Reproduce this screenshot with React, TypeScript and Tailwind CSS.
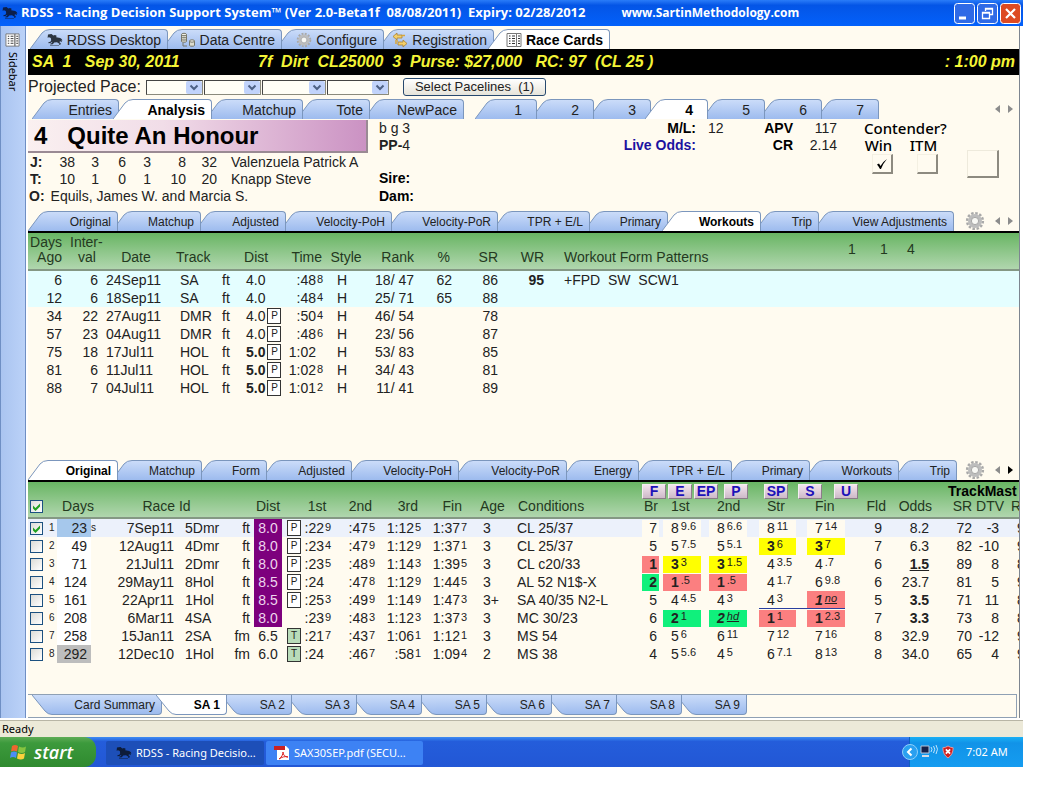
import React, { useState } from 'react';
import clsx from 'clsx';

interface TabItem {
    label: string;
    width: string;
    icon?: React.ReactNode;
}

interface TabStripProps {
    tabs: TabItem[];
    active?: string;
    onSelect: (label: string) => void;
    text?: string;
    pad?: string;
}

function HorseIcon({ className = "w-4 h-4 text-slate-800" }: { className?: string }) {
    return (
        <svg viewBox="0 0 16 16" className={clsx("shrink-0", className)} fill="currentColor" aria-hidden="true">
            <path d="M1 2.5 4.5 2l1.8 1.6L8 3l1.6.8-.4 1.4 2.8.6c1.6.3 2.6 1 3.5 2.6l-1-.1.4 1.9-1.6-1-1 .7 1.6 1.6-.8 1.6-1-.3.3-1.1-2.4-1.4-2.8.2-1.4 1.7-2.3.4-.3-.9 1.7-.6.5-1.4L3.4 11l-1.9.2-.1-.9 2-.5.8-1.6L3.8 6 2 5.3.6 5.7z" />
            <path d="M3 13h9v1H3z" opacity=".5" />
        </svg>
    );
}

function GearIcon({ className = "w-5 h-5" }: { className?: string }) {
    return (
        <svg viewBox="0 0 20 20" className={clsx("shrink-0", className)} fill="none" aria-hidden="true">
            <circle cx="10" cy="10" r="7.800" stroke="#a9a9a9" strokeWidth="2.600" strokeDasharray="2.450 1.634" />
            <circle cx="10" cy="10" r="5.200" stroke="#bdbdbd" strokeWidth="3.600" />
            <circle cx="10" cy="10" r="3.600" fill="#f8f8f4" stroke="#969696" strokeWidth=".8" />
        </svg>
    );
}

function DataIcon() {
    return (
        <svg viewBox="0 0 16 16" className="w-4 h-4 shrink-0" aria-hidden="true">
            <path d="M1.5 2.5v7c0 1 5 1 5 0v-7" fill="#dcdccf" stroke="#77776a" />
            <ellipse cx="4" cy="2.5" rx="2.5" ry="1.2" fill="#f1f1e8" stroke="#77776a" />
            <path d="M1.5 5c0 1 5 1 5 0M1.5 7.300c0 1 5 1 5 0M3 11v3h4" fill="none" stroke="#77776a" />
            <path d="M9.500 9v4.500c0 1 5 1 5 0V9" fill="#dcdccf" stroke="#77776a" />
            <ellipse cx="12" cy="9" rx="2.500" ry="1.200" fill="#f1f1e8" stroke="#77776a" />
        </svg>
    );
}

function RegisterIcon() {
    return (
        <svg viewBox="0 0 16 16" className="w-4 h-4 shrink-0" fill="#f3cf6a" stroke="#a98232" strokeWidth=".8" aria-hidden="true">
            <path d="M1 4.500 5 1v2h5v3H5v2z" />
            <path d="M15 11.500 11 15v-2H6v-3h5V8z" />
            <path d="M3 9h3M3 11h2M10 3.500h3" stroke="#d9a63a" strokeWidth="1.400" />
        </svg>
    );
}

function CardIcon({ className = "w-4 h-4" }: { className?: string }) {
    return (
        <svg viewBox="0 0 16 16" className={clsx("shrink-0", className)} aria-hidden="true">
            <path d="M1 1.500h9.500v13H1zM10.500 1.500H15v13h-4.500z" fill="#fff" stroke="#777" />
            <path d="M3 4h1.500M3 6.500h1.500M3 9h1.500M3 11.500h1.500M6 4h3M6 6.500h3M6 9h3M6 11.500h3M12 4h2M12 6.500h2M12 9h2M12 11.500h2" stroke="#333" />
        </svg>
    );
}

function Arrows({ rightActive = false }: { rightActive?: boolean }) {
    return (
        <div className="flex items-center gap-2 pr-1.5">
            <button aria-label="Scroll tabs left"><svg viewBox="0 0 5 8" className="w-[5px] h-2"><path d="M5 0v8L0 4z" fill="#8c8c8c" /></svg></button>
            <button aria-label="Scroll tabs right"><svg viewBox="0 0 5 8" className="w-[5px] h-2"><path d="M0 0v8l5-4z" fill={rightActive ? "#000" : "#8c8c8c"} /></svg></button>
        </div>
    );
}

function TabStrip({ tabs, active, onSelect, text = "text-xs", pad = "pr-1.5" }: TabStripProps) {
    return (
        <div className="flex h-5">
            {tabs.map((tab, i) => {
                const on = tab.label === active;
                return (
                    <button
                        key={tab.label}
                        onClick={() => onSelect(tab.label)}
                        style={{ zIndex: on ? 30 : 20 - i }}
                        className={clsx("relative flex h-5 shrink-0 whitespace-nowrap", i > 0 && "-ml-1.5", tab.width, text)}
                    >
                        <svg viewBox="0 0 20 20" className="w-5 h-5 shrink-0">
                            <path d="M0 20 12 4Q15 .5 20 .5V20Z" fill={on ? "#fff" : "url(#tabFill)"} />
                            <path d="M0 20 12 4Q15 .5 20 .5" fill="none" stroke="#7b96bd" />
                        </svg>
                        <span
                            className={clsx(
                                "flex h-5 flex-1 items-center justify-end gap-1 rounded-tr-[4px] border-t border-r border-[#7b96bd]",
                                pad,
                                on ? "bg-white font-bold text-black" : "bg-linear-to-b from-[#cbdcf9] to-[#9dbbee] text-[#222]"
                            )}
                        >
                            <span className="-ml-5 flex items-center gap-1">{tab.icon}{tab.label}</span>
                        </span>
                    </button>
                );
            })}
        </div>
    );
}

// bottom tabs hang down from the sheet, so the slant runs the other way
function SheetTabs({ tabs, active, onSelect }: TabStripProps) {
    return (
        <div className="flex h-5 pl-1">
            {tabs.map((tab, i) => {
                const on = tab.label === active;
                return (
                    <button
                        key={tab.label}
                        onClick={() => onSelect(tab.label)}
                        style={{ zIndex: on ? 30 : 20 - i }}
                        className={clsx("relative flex h-5 shrink-0 text-xs whitespace-nowrap", i > 0 && "-ml-1.5", tab.width)}
                    >
                        <svg viewBox="0 0 20 20" className="w-5 h-5 shrink-0">
                            <path d="M0 0 13 16Q16 19.500 20 19.500V0Z" fill={on ? "#fff" : "url(#tabFill)"} />
                            <path d="M0 0 13 16Q16 19.500 20 19.500" fill="none" stroke="#7b96bd" />
                        </svg>
                        <span className={clsx("flex h-5 flex-1 items-center justify-end rounded-br-[4px] border-r border-b border-[#7b96bd] pr-1.5", on ? "bg-white font-bold text-black" : "bg-linear-to-b from-[#cbdcf9] to-[#9dbbee] text-[#222]")}>
                            <span className="-ml-4">{tab.label}</span>
                        </span>
                    </button>
                );
            })}
        </div>
    );
}

function Check({ label, defaultChecked = false }: { label: string; defaultChecked?: boolean }) {
    return (
        <label className="relative block w-[13px] h-[13px]">
            <input type="checkbox" aria-label={label} defaultChecked={defaultChecked} className="peer block w-[13px] h-[13px] appearance-none border border-[#1c5180] bg-linear-to-br from-[#dcdcd7] to-white" />
            <svg viewBox="0 0 13 13" className="pointer-events-none absolute inset-0 hidden peer-checked:block"><path d="M3 5.500v3L5.500 11 10 6.500v-3L5.500 8z" fill="#21a121" /></svg>
        </label>
    );
}

function PaceSelect({ label, width }: { label: string; width: string }) {
    return (
        <span className={clsx("relative block h-[15px] border border-[#8a8a7c] border-t-[#444] border-l-[#444]", width)}>
            <select aria-label={label} className="block w-full h-full appearance-none bg-[#fffef6] text-xs"><option></option></select>
            <svg viewBox="0 0 16 13" className="pointer-events-none absolute top-0 right-0 w-4 h-[13px]">
                <rect width="16" height="13" rx="2" fill="#c1d3fb" />
                <path d="m4.500 4.500 3.500 3.500 3.500-3.500" fill="none" stroke="#4d6185" strokeWidth="2" />
            </svg>
        </span>
    );
}

function Surface({ value }: { value: string }) {
    return <span className={clsx("inline-flex w-3.5 h-4 items-center justify-center border border-[#333] align-top text-[10px]", value === "T" ? "bg-[#b9dcb9]" : "bg-white")}>{value}</span>;
}

// fractional seconds are written small, in a slot of fixed width so the colons line up
function Clock({ value }: { value: string }) {
    const [main, part] = value.split("^");
    return <>{main}<span className="inline-block w-2 h-4 pl-px text-left align-top text-[11px] leading-[14px]">{part}</span></>;
}

const mainTabs: TabItem[] = [
    { label: "RDSS Desktop", width: "w-[138px]", icon: <HorseIcon className="w-4 h-4 text-[#2c3540]" /> },
    { label: "Data Centre", width: "w-[120px]", icon: <DataIcon /> },
    { label: "Configure", width: "w-[108px]", icon: <GearIcon className="w-4 h-4" /> },
    { label: "Registration", width: "w-[116px]", icon: <RegisterIcon /> },
    { label: "Race Cards", width: "w-[122px]", icon: <CardIcon /> },
];

const viewTabs: TabItem[] = [
    { label: "Entries", width: "w-[87px]" },
    { label: "Analysis", width: "w-[99px]" },
    { label: "Matchup", width: "w-[97px]" },
    { label: "Tote", width: "w-[73px]" },
    { label: "NewPace", width: "w-[100px]" },
];

const horseTabs: TabItem[] = ["1", "2", "3", "4", "5", "6", "7"].map((label, i) => ({ label, width: i === 0 ? "w-[62px]" : "w-[63px]" }));

const workTabs: TabItem[] = [
    { label: "Original", width: "w-[90px]" },
    { label: "Matchup", width: "w-[89px]" },
    { label: "Adjusted", width: "w-[91px]" },
    { label: "Velocity-PoH", width: "w-[112px]" },
    { label: "Velocity-PoR", width: "w-[112px]" },
    { label: "TPR + E/L", width: "w-[98px]" },
    { label: "Primary", width: "w-[84px]" },
    { label: "Workouts", width: "w-[99px]" },
    { label: "Trip", width: "w-[64px]" },
    { label: "View Adjustments", width: "w-[141px]" },
];

const lineTabs: TabItem[] = [
    { label: "Original", width: "w-[90px]" },
    { label: "Matchup", width: "w-[90px]" },
    { label: "Form", width: "w-[71px]" },
    { label: "Adjusted", width: "w-[91px]" },
    { label: "Velocity-PoH", width: "w-[113px]" },
    { label: "Velocity-PoR", width: "w-[114px]" },
    { label: "Energy", width: "w-[78px]" },
    { label: "TPR + E/L", width: "w-[99px]" },
    { label: "Primary", width: "w-[84px]" },
    { label: "Workouts", width: "w-[95px]" },
    { label: "Trip", width: "w-[64px]" },
];

const sheetTabs: TabItem[] = ["Card Summary", "SA 1", "SA 2", "SA 3", "SA 4", "SA 5", "SA 6", "SA 7", "SA 8", "SA 9"].map((label, i) => ({ label, width: i === 0 ? "w-[130px]" : "w-[71px]" }));

const workouts = [
    ["6", "6", "24Sep11", "SA", "ft", "4.0", "", ":48^8", "H", "18/ 47", "62", "86", "95", "+FPD  SW  SCW1"],
    ["12", "6", "18Sep11", "SA", "ft", "4.0", "", ":48^4", "H", "25/ 71", "65", "88", "", ""],
    ["34", "22", "27Aug11", "DMR", "ft", "4.0", "P", ":50^4", "H", "46/ 54", "", "78", "", ""],
    ["57", "23", "04Aug11", "DMR", "ft", "4.0", "P", ":48^6", "H", "23/ 56", "", "87", "", ""],
    ["75", "18", "17Jul11", "HOL", "ft", "5.0", "P", "1:02", "H", "53/ 83", "", "85", "", ""],
    ["81", "6", "11Jul11", "HOL", "ft", "5.0", "P", "1:02^8", "H", "34/ 43", "", "81", "", ""],
    ["88", "7", "04Jul11", "HOL", "ft", "5.0", "P", "1:01^2", "H", "11/ 41", "", "89", "", ""],
];

interface RaceLine {
    days: string;
    date: string;
    track: string;
    going: string;
    dist: string;
    box: string;
    times: string[];
    age: string;
    cond: string;
    calls: string[];
    fld: string;
    odds: string;
    sr: string;
    dtv: string;
    last: string;
}

// a call is position^lengths; the leading letter picks the highlight colour
const lines: RaceLine[] = [
    { days: "23", date: "7Sep11", track: "5Dmr", going: "ft", dist: "8.0", box: "P", times: [":22^9", ":47^5", "1:12^5", "1:37^7"], age: "3", cond: "CL 25/37", calls: ["7", "8^9.6", "8^6.6", "8^11", "7^14"], fld: "9", odds: "8.2", sr: "72", dtv: "-3", last: "9" },
    { days: "49", date: "12Aug11", track: "4Dmr", going: "ft", dist: "8.0", box: "P", times: [":23^4", ":47^9", "1:12^9", "1:37^1"], age: "3", cond: "CL 25/37", calls: ["5", "5^7.5", "5^5.1", "Y3^6", "Y3^7"], fld: "7", odds: "6.3", sr: "82", dtv: "-10", last: "9" },
    { days: "71", date: "21Jul11", track: "2Dmr", going: "ft", dist: "8.0", box: "P", times: [":23^5", ":48^9", "1:14^3", "1:39^5"], age: "3", cond: "CL c20/33", calls: ["R1", "Y3^3", "Y3^1.5", "4^3.5", "4^.7"], fld: "6", odds: "1.5", sr: "89", dtv: "8", last: "8" },
    { days: "124", date: "29May11", track: "8Hol", going: "ft", dist: "8.5", box: "P", times: [":24", ":47^8", "1:12^9", "1:44^5"], age: "3", cond: "AL 52 N1$-X", calls: ["G2", "R1^.5", "R1^.5", "4^1.7", "6^9.8"], fld: "6", odds: "23.7", sr: "81", dtv: "5", last: "9" },
    { days: "161", date: "22Apr11", track: "1Hol", going: "ft", dist: "8.5", box: "P", times: [":25^3", ":49^9", "1:14^9", "1:47^3"], age: "3+", cond: "SA 40/35 N2-L", calls: ["5", "4^4.5", "4^3", "4^3", "R1^no"], fld: "5", odds: "3.5", sr: "71", dtv: "11", last: "8" },
    { days: "208", date: "6Mar11", track: "4SA", going: "ft", dist: "8.0", box: "", times: [":23^9", ":48^3", "1:12^3", "1:37^3"], age: "3", cond: "MC 30/23", calls: ["6", "G2^1", "G2^hd", "R1^1", "R1^2.3"], fld: "7", odds: "3.3", sr: "73", dtv: "8", last: "8" },
    { days: "258", date: "15Jan11", track: "2SA", going: "fm", dist: "6.5", box: "T", times: [":21^7", ":43^7", "1:06^1", "1:12^1"], age: "3", cond: "MS 54", calls: ["6", "5^6", "6^11", "7^12", "7^16"], fld: "8", odds: "32.9", sr: "70", dtv: "-12", last: "9" },
    { days: "292", date: "12Dec10", track: "1Hol", going: "fm", dist: "6.0", box: "T", times: [":24", ":46^7", ":58^1", "1:09^4"], age: "2", cond: "MS 38", calls: ["4", "5^5.6", "4^5", "6^7.1", "8^13"], fld: "8", odds: "34.0", sr: "65", dtv: "4", last: "9" },
];

const callTone: Record<string, string> = { R: "bg-[#fb7f80]", Y: "bg-[#ffff00]", G: "bg-[#10f07c]" };
const callBox = ["w-[17px] justify-end pr-0.5", "w-[38px] pl-2", "w-[38px] pl-2", "w-[37px] pl-2", "w-[38px] pl-2"];

function Call({ value, slot }: { value: string; slot: number }) {
    const tone = callTone[value[0]];
    const [pos, beaten] = (tone ? value.slice(1) : value).split("^");
    const close = beaten === "no" || beaten === "hd";
    return (
        <div className={clsx("flex h-[17px] items-center", callBox[slot], tone ?? "bg-[#fffbf0]", tone && "font-bold", close && "italic")}>
            {pos}
            {beaten && <span className={clsx("pl-0.5 pb-1 text-[11px] font-normal leading-[12px]", close && "underline")}>{beaten}</span>}
        </div>
    );
}

function WorkoutTable() {
    return (
        <table className="w-full table-fixed border-separate border-spacing-0 text-sm leading-4 text-[#222]">
            <colgroup>
                <col className="w-9" /><col className="w-9" /><col className="w-[72px]" /><col className="w-11" /><col className="w-6" /><col className="w-11" />
                <col className="w-[42px]" /><col className="w-10" /><col className="w-[52px]" /><col className="w-[38px]" /><col className="w-[46px]" /><col className="w-[46px]" /><col className="w-[300px]" /><col />
            </colgroup>
            <thead className="bg-linear-to-b from-[#68b563] to-[#b4d8b2]">
                <tr className="h-[38px] align-bottom leading-[15px] text-[#24391f] *:border-b-2 *:border-[#849884] *:p-0 *:pb-1 *:font-normal">
                    <th><div className="pr-0.5 text-right">Days Ago</div></th>
                    <th className="text-left"><div className="pl-1.5">Inter-</div><div className="pl-3.5">val</div></th>
                    <th>Date</th>
                    <th colSpan={2} className="text-left"><div className="pl-1">Track</div></th>
                    <th className="text-left"><div className="pl-1">Dist</div></th>
                    <th><div className="pr-1 text-right">Time</div></th>
                    <th>Style</th>
                    <th><div className="pr-1 text-right">Rank</div></th>
                    <th><div className="pr-1.5 text-right">%</div></th>
                    <th><div className="pr-1 text-right">SR</div></th>
                    <th><div className="pr-1 text-right">WR</div></th>
                    <th className="text-left"><div className="pl-4">Workout Form Patterns</div></th>
                    <th className="align-middle"><div className="flex text-left"><span className="w-8">1</span><span className="w-[27px]">1</span><span>4</span></div></th>
                </tr>
            </thead>
            <tbody>
                {workouts.map((w, i) => (
                    <tr key={i} className={clsx("h-[18px] *:p-0 *:whitespace-pre", i < 2 && "bg-[#e4feff]")}>
                        <td className="text-right"><div className="pr-0.5">{w[0]}</div></td>
                        <td className="text-right"><div className="pr-0.5">{w[1]}</div></td>
                        <td><div className="pl-1.5">{w[2]}</div></td>
                        <td><div className="pl-2">{w[3]}</div></td>
                        <td><div className="pl-1.5">{w[4]}</div></td>
                        <td><div className={clsx("flex h-4 items-center pl-1.5", w[5] === "5.0" && "font-bold")}>{w[5]}{w[6] && <span className="pl-0.5 font-normal"><Surface value={w[6]} /></span>}</div></td>
                        <td className="text-right"><div className="h-4 pr-0.5"><Clock value={w[7]} /></div></td>
                        <td><div className="pl-[11px]">{w[8]}</div></td>
                        <td className="text-right"><div className="pr-1">{w[9]}</div></td>
                        <td className="text-right"><div className="pr-1">{w[10]}</div></td>
                        <td className="text-right"><div className="pr-1">{w[11]}</div></td>
                        <td className="text-right font-bold"><div className="pr-1">{w[12]}</div></td>
                        <td><div className="pl-4">{w[13]}</div></td>
                        <td></td>
                    </tr>
                ))}
            </tbody>
        </table>
    );
}

function StyleButton({ children, gap }: { children: string; gap: string }) {
    return <button className={clsx("h-[15px] w-6 border border-[#f5eef2] border-r-[#8b7d88] border-b-[#8b7d88] bg-linear-to-b from-[#f3e6ee] to-[#cdb9c8] text-sm leading-[13px] font-bold text-[#1c12b8]", gap)}>{children}</button>;
}

function LinesTable() {
    return (
        <table className="w-full table-fixed border-separate border-spacing-0 text-sm leading-4 text-[#222]">
            <colgroup>
                <col className="w-[29px]" /><col className="w-[34px]" /><col className="w-2" /><col className="w-[79px]" /><col className="w-12" /><col className="w-7" /><col className="w-7" /><col className="w-5" />
                <col className="w-[30px]" /><col className="w-[46px]" /><col className="w-[46px]" /><col className="w-[46px]" /><col className="w-10" /><col className="w-[132px]" />
                <col className="w-[21px]" /><col className="w-[46px]" /><col className="w-[50px]" /><col className="w-12" /><col className="w-[38px]" />
                <col className="w-[41px]" /><col className="w-[47px]" /><col className="w-[43px]" /><col className="w-[27px]" /><col />
            </colgroup>
            <thead className="bg-linear-to-b from-[#68b563] to-[#b4d8b2] text-[#24391f]">
                <tr className="h-[17px] *:p-0">
                    <th colSpan={14}></th>
                    <th colSpan={7}>
                        <div className="flex pt-px">
                            <StyleButton gap="">F</StyleButton>
                            <StyleButton gap="ml-0.5">E</StyleButton>
                            <StyleButton gap="ml-0.5">EP</StyleButton>
                            <StyleButton gap="ml-1.5">P</StyleButton>
                            <StyleButton gap="ml-4">SP</StyleButton>
                            <StyleButton gap="ml-2.5">S</StyleButton>
                            <StyleButton gap="ml-3">U</StyleButton>
                        </div>
                    </th>
                    <th colSpan={3} className="overflow-hidden text-left text-black"><div className="pl-[15px]">TrackMast</div></th>
                </tr>
                <tr className="h-5 *:border-b-2 *:border-[#849884] *:p-0 *:pb-1 *:font-normal *:leading-[14px]">
                    <th><div className="pl-0.5"><Check label="Select all lines" defaultChecked /></div></th>
                    <th colSpan={2}>Days</th>
                    <th colSpan={2}><div className="pl-2">Race Id</div></th>
                    <th colSpan={3}><div className="pl-2">Dist</div></th>
                    <th>1st</th>
                    <th><div className="pr-1.5 text-right">2nd</div></th>
                    <th><div className="pr-1.5 text-right">3rd</div></th>
                    <th><div className="pr-2 text-right">Fin</div></th>
                    <th className="text-left"><div className="pl-2.5">Age</div></th>
                    <th className="text-left"><div className="pl-2">Conditions</div></th>
                    <th className="text-left"><div className="pl-0.5">Br</div></th>
                    <th className="text-left"><div className="pl-2">1st</div></th>
                    <th className="text-left"><div className="pl-2">2nd</div></th>
                    <th className="text-left"><div className="pl-2">Str</div></th>
                    <th className="text-left"><div className="pl-2">Fin</div></th>
                    <th><div className="text-right">Fld</div></th>
                    <th><div className="pr-px text-right">Odds</div></th>
                    <th><div className="pr-1 text-right">SR</div></th>
                    <th><div className="text-right">DTV</div></th>
                    <th className="overflow-hidden text-left"><div className="pl-2">R</div></th>
                </tr>
            </thead>
            <tbody>
                {lines.map((r, i) => (
                    <tr key={r.date} className={clsx("h-[18px] *:p-0", i === 0 && "bg-[#ecf1fb]")}>
                        <td><div className="flex items-center gap-1.5 pl-0.5"><Check label={"Line " + (i + 1)} defaultChecked={i === 0} /><span className="text-[10px]">{i + 1}</span></div></td>
                        <td className={clsx("text-right", i === 0 ? "bg-[#a6c8ec]" : i === 7 ? "bg-[#bdbdbd]" : "bg-white")}><div className="pr-1">{r.days}</div></td>
                        <td className="text-[10px]">{i === 0 && "s"}</td>
                        <td className="text-right"><div className="pr-1">{r.date}</div></td>
                        <td><div className="pl-[7px]">{r.track}</div></td>
                        <td className="text-right"><div className="pr-1">{r.going}</div></td>
                        <td className={clsx("text-center", i < 6 && "bg-[#7d007d] text-[#eed5ee]")}>{r.dist}</td>
                        <td><div className="h-4 pl-[5px]">{r.box && <Surface value={r.box} />}</div></td>
                        {r.times.map((t, n) => <td key={n} className="text-right"><div className={clsx("h-4", n > 0 && "pr-0.5")}><Clock value={t} /></div></td>)}
                        <td><div className="pl-[13px]">{r.age}</div></td>
                        <td><div className="pl-[7px]">{r.cond}</div></td>
                        {r.calls.map((c, n) => <td key={n} className={clsx(i === 4 && n > 2 && "border-b border-[#2a3fa0]")}><Call value={c} slot={n} /></td>)}
                        <td className="text-right"><div className="pr-1">{r.fld}</div></td>
                        <td className={clsx("text-right", parseFloat(r.odds) < 5 && "font-bold")}><div className={clsx("pr-1", r.odds === "1.5" && "underline")}>{r.odds}</div></td>
                        <td className="text-right"><div className="pr-1">{r.sr}</div></td>
                        <td className="text-right"><div className="pr-1">{r.dtv}</div></td>
                        <td className="overflow-hidden"><div className="pl-3.5">{r.last}</div></td>
                    </tr>
                ))}
            </tbody>
        </table>
    );
}

function HorseInfo() {
    const people = [
        { key: "J:", stats: ["38", "3", "6", "3", "8", "32"], name: "Valenzuela Patrick A" },
        { key: "T:", stats: ["10", "1", "0", "1", "10", "20"], name: "Knapp Steve" },
    ];
    const statWidth = ["w-7", "w-6", "w-[27px]", "w-[25px]", "w-[35px]", "w-[31px]"];
    return (
        <div className="flex min-h-[92px] pt-px text-sm leading-4 text-[#222]">
            <div className="w-[340px] shrink-0">
                <h1 className="flex h-[33px] items-center gap-5 border-r-2 border-b-2 border-[#9a8a94] bg-linear-to-r from-[#faf0f0] via-[#f1dde8] via-40% to-[#cb92c3] pl-1.5 text-2xl font-bold text-black"><span>4</span><span>Quite An Honour</span></h1>
                {people.map((p) => (
                    <div key={p.key} className="flex h-[17px] items-center pl-0.5">
                        <b className="w-[17px]">{p.key}</b>
                        {p.stats.map((s, i) => <span key={i} className={clsx("text-right", statWidth[i])}>{s}</span>)}
                        <span className="pl-3.5">{p.name}</span>
                    </div>
                ))}
                <div className="flex h-[18px] items-center gap-1.5 pl-px"><b>O:</b><span>Equils, James W. and Marcia S.</span></div>
            </div>
            <div className="w-[210px] pl-[11px]">
                <div className="h-[17px]">b g 3</div>
                <div className="h-[33px]"><b>PP-</b>4</div>
                <div className="h-[18px] font-bold text-black">Sire:</div>
                <div className="font-bold text-black">Dam:</div>
            </div>
            <dl className="grid h-fit grid-cols-[118px_53px_44px_44px] leading-[17px]">
                <dt className="text-right font-bold text-black">M/L:</dt><dd className="pl-3">12</dd>
                <dt className="text-right font-bold text-black">APV</dt><dd className="text-right">117</dd>
                <dt className="text-right font-bold text-[#1b12a0]">Live Odds:</dt><dd></dd>
                <dt className="text-right font-bold text-black">CR</dt><dd className="text-right">2.14</dd>
            </dl>
            <fieldset className="ml-[27px] font-['Noto_Sans',sans-serif] text-[15px] leading-[17px] font-medium text-black">
                <legend>Contender?</legend>
                <div className="flex gap-4">
                    {["Win", "ITM"].map((name) => (
                        <label key={name} className="flex flex-col items-center">
                            {name}
                            <span className="relative ml-2 block">
                                <input type="checkbox" defaultChecked={name === "Win"} className="peer block h-5 w-[21px] appearance-none border border-[#f4f0e2] border-r-2 border-b-2 border-r-[#8d8a80] border-b-[#8d8a80]" />
                                <svg viewBox="0 0 12 12" className="pointer-events-none absolute top-1 left-1 hidden w-3 h-3 peer-checked:block"><path d="M1 6.500 3 5.500 4.500 8Q7 3.500 11 1 7 5.500 5 11H4Q2.500 8 1 6.500Z" fill="#000" /></svg>
                            </span>
                        </label>
                    ))}
                </div>
            </fieldset>
            <button aria-label="Notes" className="mt-[30px] ml-5 h-7 w-8 border border-[#eeeadc] border-r-2 border-b-2 border-r-[#8d8a80] border-b-[#8d8a80]"></button>
        </div>
    );
}

function Taskbar() {
    return (
        <footer className="flex h-[30px] items-stretch bg-linear-to-b from-[#3f8cf3] via-[#245ddb] via-15% to-[#2257d5] font-['Noto_Sans',sans-serif] text-[11px] text-white">
            <button className="flex w-24 items-center gap-1.5 rounded-r-xl bg-linear-to-b from-[#5eac56] via-[#3c9a3c] via-20% to-[#2f8a2f] pl-2.5 font-['Open_Sans',sans-serif] text-lg font-semibold italic">
                <svg viewBox="0 0 18 18" className="w-[18px] h-[18px]" aria-hidden="true">
                    <path d="M2 3q3-2 6 0L7 8.500Q4 7 1 8.500z" fill="#f0652f" />
                    <path d="M9 3.500q4 2 7 0L15 9q-3 2-7 0z" fill="#86c440" />
                    <path d="M1 9.500q3-2 6 0L6 15q-3-2-6 0z" fill="#4d8df5" />
                    <path d="M8 10q4 2 7 0l-1 5.500q-3 2-7 0z" fill="#fbd13c" />
                </svg>
                start
            </button>
            <button className="ml-2.5 mt-1 mb-0.5 flex w-[158px] items-center gap-1 rounded-[2px] bg-[#1d4fb8] pl-2.5"><HorseIcon className="w-4 h-4 text-[#0d1c3a]" />RDSS - Racing Decisio...</button>
            <button className="ml-0.5 mt-1 mb-0.5 flex w-[157px] items-center gap-1 rounded-[2px] bg-[#3d82f4] pl-2">
                <svg viewBox="0 0 16 16" className="w-4 h-4" aria-hidden="true">
                    <path d="M3 1h9l3 3v11H3z" fill="#fff" />
                    <path d="M0 1h11v4H0z" fill="#c22" />
                    <path d="M5 14c3-2 4-5 4-7 0 3 2 5 5 5-3-1-6 0-9 2z" fill="none" stroke="#d22" />
                </svg>
                SAX30SEP.pdf (SECU...
            </button>
            <div className="ml-auto flex w-[120px] items-center">
                <div className="flex h-full flex-1 items-center border-l border-[#0c5fc0] bg-linear-to-b from-[#1ab0f5] via-[#1193e8] via-20% to-[#159cf0] ml-1.5">
                    <button aria-label="Show hidden icons" className="-ml-2">
                        <svg viewBox="0 0 16 16" className="w-4 h-4"><circle cx="8" cy="8" r="7.500" fill="#2aa0f0" stroke="#8fd0fa" /><path d="M9.500 4.500 6 8l3.500 3.500" fill="none" stroke="#fff" strokeWidth="2" /></svg>
                    </button>
                    <svg viewBox="0 0 18 16" className="ml-0.5 w-[18px] h-4" aria-hidden="true">
                        <path d="M1 2h8v7H1z" fill="#14204a" stroke="#b8c4d8" />
                        <path d="M2 11h7v2H2z" fill="#d5dbe5" />
                        <path d="M11 3q2 2 0 5M13.500 2q2.500 3 0 7M16 1q3 4 0 9" fill="none" stroke="#bfe2fb" />
                    </svg>
                    <svg viewBox="0 0 14 16" className="ml-1 w-3 h-4" aria-hidden="true">
                        <path d="M7 1q3 2 6 2 0 8-6 12Q1 11 1 3q3 0 6-2z" fill="#cf1f1f" stroke="#f0a0a0" />
                        <path d="m4.500 5 5 5m0-5-5 5" stroke="#fff" strokeWidth="2" />
                    </svg>
                    <span className="ml-3">7:02 AM</span>
                </div>
            </div>
        </footer>
    );
}

export default function App() {
    const [mainTab, setMainTab] = useState("Race Cards");
    const [view, setView] = useState("Analysis");
    const [horse, setHorse] = useState("4");
    const [workTab, setWorkTab] = useState("Workouts");
    const [lineTab, setLineTab] = useState("Original");
    const [sheet, setSheet] = useState("SA 1");

    return (
        <div className="bg-white pr-7 font-['Liberation_Sans',Arial,sans-serif]">
            <svg className="absolute w-0 h-0" aria-hidden="true">
                <defs>
                    <linearGradient id="tabFill" x1="0" y1="0" x2="0" y2="1">
                        <stop offset="0" stopColor="#cbdcf9" />
                        <stop offset="1" stopColor="#9dbbee" />
                    </linearGradient>
                </defs>
            </svg>

            <header className="flex h-[26px] items-center bg-linear-to-b from-[#2a7cf8] via-[#0455e6] via-20% to-[#0361fb] pr-0.5 pl-0.5 font-['Open_Sans',sans-serif] text-[13px] font-bold whitespace-pre text-white">
                <HorseIcon className="w-4 h-4 text-[#0c1f4a]" />
                <span className="pl-[3px]">RDSS - Racing Decision Support System™ (Ver 2.0-Beta1f  08/08/2011)  Expiry: 02/28/2012</span>
                <span className="pl-9 text-xs">www.SartinMethodology.com</span>
                <div className="ml-auto flex gap-0.5">
                    <button aria-label="Minimize"><svg viewBox="0 0 21 21" className="w-[21px] h-[21px]"><rect x=".5" y=".5" width="20" height="20" rx="3" fill="#2f6ae6" stroke="#fff" /><path d="M5 15h7" stroke="#fff" strokeWidth="3" /></svg></button>
                    <button aria-label="Restore"><svg viewBox="0 0 21 21" className="w-[21px] h-[21px]"><rect x=".5" y=".5" width="20" height="20" rx="3" fill="#2f6ae6" stroke="#fff" /><path d="M8.500 8V5.500h7v6H13M5.500 9.500h7v6h-7zM8 6h8M5 10h8" fill="none" stroke="#fff" strokeWidth="1.300" /></svg></button>
                    <button aria-label="Close"><svg viewBox="0 0 21 21" className="w-[21px] h-[21px]"><rect x=".5" y=".5" width="20" height="20" rx="3" fill="#dd4a22" stroke="#fff" /><path d="m6 6 9 9m0-9-9 9" stroke="#fff" strokeWidth="2.200" /></svg></button>
                </div>
            </header>

            <div className="flex">
                <aside className="w-[26px] shrink-0 border-x border-[#6f8fc4] bg-linear-to-r from-[#aac4f0] to-[#bbd2f8]">
                    <button className="flex flex-col items-center gap-1 pt-1.5 pl-1 font-['Noto_Sans',sans-serif] text-[11px] text-black">
                        <CardIcon className="w-[15px] h-4" />
                        <span className="[writing-mode:vertical-rl] leading-3">Sidebar</span>
                    </button>
                </aside>
                <main className="mr-[3px] ml-0.5 min-w-0 flex-1 border-r border-[#7d8590] bg-[#fffbf0]">
                    <div className="pt-[3px] pl-0.5"><TabStrip tabs={mainTabs} active={mainTab} onSelect={setMainTab} text="text-sm" /></div>

                    <div className="flex h-[26px] items-center bg-black pl-1 text-base font-bold whitespace-pre text-[#f4f436] italic">
                        <span className="w-[226px]">SA  1   Sep 30, 2011</span>
                        <span>7f  Dirt  CL25000  3  Purse: $27,000   RC: 97  (CL 25 )</span>
                        <span className="ml-auto pr-1">: 1:00 pm</span>
                    </div>

                    <div className="flex h-6 items-center text-base text-[#222]">
                        <span className="w-[118px]">Projected Pace:</span>
                        <div className="flex gap-px">
                            <PaceSelect label="Projected pace 1" width="w-[57px]" />
                            <PaceSelect label="Projected pace 2" width="w-[57px]" />
                            <PaceSelect label="Projected pace 3" width="w-[64px]" />
                            <PaceSelect label="Projected pace 4" width="w-[62px]" />
                        </div>
                        <button className="ml-3.5 h-[18px] w-[143px] rounded-[3px] border border-[#27496f] bg-linear-to-b from-white to-[#e6e4da] text-[13px] leading-4 whitespace-pre">Select Pacelines  (1)</button>
                    </div>

                    <div className="flex items-center pl-1">
                        <TabStrip tabs={viewTabs} active={view} onSelect={setView} text="text-sm" />
                        <div className="ml-[11px]"><TabStrip tabs={horseTabs} active={horse} onSelect={setHorse} text="text-sm" pad="pr-3.5" /></div>
                        <div className="ml-auto"><Arrows /></div>
                    </div>

                    <HorseInfo />

                    <div className="flex items-center border-b-2 border-black">
                        <TabStrip tabs={workTabs} active={workTab} onSelect={setWorkTab} />
                        <div className="ml-auto flex items-center gap-2.5"><GearIcon /><Arrows /></div>
                    </div>
                    <div className="min-h-[227px]"><WorkoutTable /></div>

                    <div className="flex items-center border-b-2 border-black">
                        <TabStrip tabs={lineTabs} active={lineTab} onSelect={setLineTab} />
                        <div className="ml-auto flex items-center gap-2.5"><GearIcon /><Arrows rightActive /></div>
                    </div>
                    <div className="min-h-[212px] overflow-hidden"><LinesTable /></div>

                    <div className="mr-0.5 h-6 border-y border-r border-[#8fa0b4]">
                        <SheetTabs tabs={sheetTabs} active={sheet} onSelect={setSheet} />
                    </div>
                </main>
            </div>

            <div className="mt-0.5 h-[17px] border-t border-[#b8b5a5] bg-[#ece9d8] pl-0.5 font-['Noto_Sans',sans-serif] text-[11px] leading-4 text-black">Ready</div>
            <Taskbar />
        </div>
    );
}
